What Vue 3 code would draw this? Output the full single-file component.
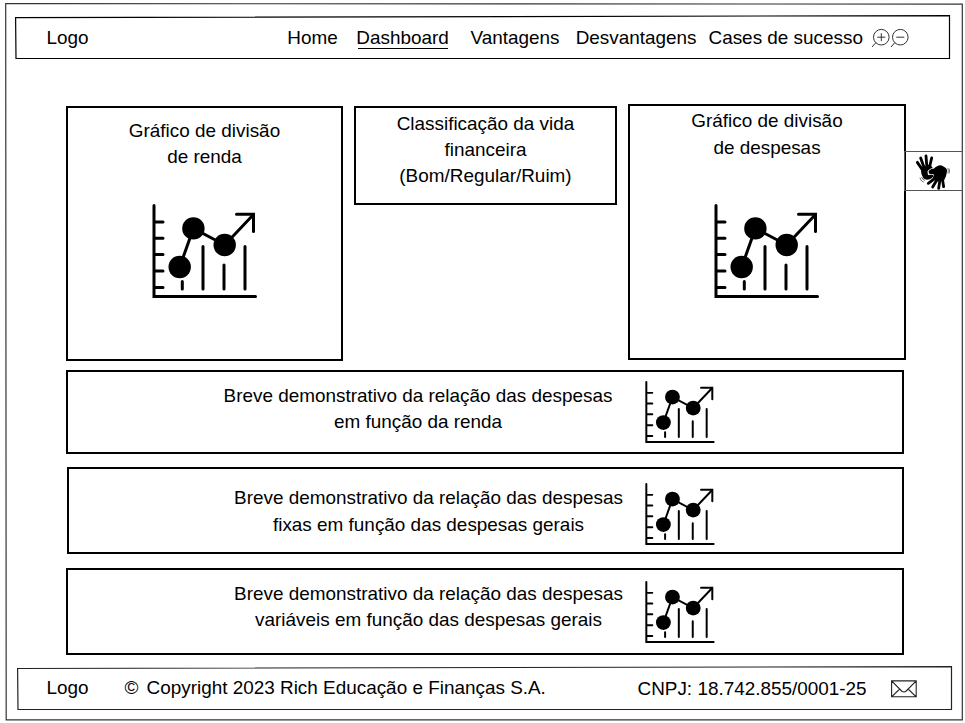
<script setup>
import { h } from 'vue'

const navItems = [
  { label: 'Home', name: 'home' },
  { label: 'Dashboard', name: 'dashboard', active: true },
  { label: 'Vantagens', name: 'vantagens' },
  { label: 'Desvantagens', name: 'desvantagens' },
  { label: 'Cases de sucesso', name: 'cases' },
]

const rows = [
  { name: 'renda', lines: ['Breve demonstrativo da relação das despesas', 'em função da renda'] },
  { name: 'fixas', lines: ['Breve demonstrativo da relação das despesas', 'fixas em função das despesas gerais'] },
  { name: 'variaveis', lines: ['Breve demonstrativo da relação das despesas', 'variáveis em função das despesas gerais'] },
]

const ChartIcon = () =>
  h('svg', { viewBox: '0 0 106 94', preserveAspectRatio: 'none', fill: 'none', stroke: '#000', 'stroke-width': 3, 'stroke-linecap': 'round' }, [
    h('path', { d: 'M2 1.5V92.5H103.5M2 18H11M2 34.2H11M2 50.5H11M2 67H11M2 83.5H11' }),
    h('path', { d: 'M30.3 77.5V85M51 42.5V85M72 61V85M93 42.5V85' }),
    h('path', { d: 'M27.7 63L41.4 24.4L72.7 41L101 11' }),
    h('path', { d: 'M84.5 10.3H101.5V27.5' }),
    h('g', { fill: '#000', stroke: 'none' }, [
      h('circle', { cx: 27.7, cy: 63, r: 11.2 }),
      h('circle', { cx: 41.4, cy: 24.4, r: 11.2 }),
      h('circle', { cx: 72.7, cy: 41, r: 11.2 }),
    ]),
  ])
</script>

<template>
  <div class="page">
    <svg class="outline" viewBox="0 0 965 723" aria-hidden="true">
      <path d="M5.7 3.6L962.3 4.1V719.8H6.2Z" stroke="#333" />
    </svg>

    <header class="bar header">
      <svg class="outline" viewBox="0 0 936 45" aria-hidden="true">
        <path d="M.6 2.6L934.5 .6V43.5H1Z" />
      </svg>
      <span class="logo">Logo</span>
      <nav class="nav">
        <a v-for="item in navItems" :key="item.name" :class="['link', item.name, { active: item.active }]">{{ item.label }}</a>
      </nav>
      <svg class="zoom" viewBox="0 0 39 20" aria-label="Zoom">
        <circle cx="10.3" cy="9.2" r="7.8" />
        <path d="M4.8 14.7L1 19M6.3 9.2H14.3M10.3 5.2V13.2" />
        <circle cx="29.3" cy="9.2" r="7.8" />
        <path d="M23.8 14.7L20 19M25.3 9.2H33.3" />
      </svg>
    </header>

    <main class="content">
      <section class="cards">
        <article class="card income">
          <p>Gráfico de divisão<br />de renda</p>
          <ChartIcon class="chart" />
        </article>
        <article class="card rating">
          <p>Classificação da vida<br />financeira<br />(Bom/Regular/Ruim)</p>
        </article>
        <article class="card expenses">
          <p>Gráfico de divisão<br />de despesas</p>
          <ChartIcon class="chart" />
        </article>
      </section>

      <section v-for="row in rows" :key="row.name" :class="['row', row.name]">
        <p>{{ row.lines[0] }}<br />{{ row.lines[1] }}</p>
        <ChartIcon class="chart-small" />
      </section>
    </main>

    <footer class="bar footer">
      <svg class="outline" viewBox="0 0 936 45" aria-hidden="true">
        <path d="M.6 2.5L934.5 .6V43.5H1Z" stroke="#222" />
      </svg>
      <span class="logo">Logo</span>
      <span class="mark">©</span>
      <span class="copyright">Copyright 2023 Rich Educação e Finanças S.A.</span>
      <span class="cnpj">CNPJ: 18.742.855/0001-25</span>
      <svg class="mail" viewBox="0 0 26 18" aria-label="E-mail">
        <path d="M.6 .9H25.2V16.8H.6ZM.6 .9L10.6 11Q12.9 13 15.2 11L25.2 .9M.6 16.8L8.7 9M25.2 16.8L17.1 9" />
      </svg>
    </footer>

    <aside class="sign">
      <svg viewBox="0 0 105 108" aria-label="Libras">
        <g stroke="#000" stroke-linecap="round" stroke-linejoin="round" fill="none">
          <path d="M24 50L7 25M29 46L17 12M36 44L33 6M43 42L50 12" stroke-width="8.5" />
          <path d="M20 46L44 34L52 44L58 56L50 70Q36 79 27 71Q20 60 20 46Z" fill="#000" stroke-width="5" />
        </g>
        <path d="M39 51Q47 43 57 43Q65 34 77 34Q97 42 95 53Q96 66 84 78L67 80L52 74L58 63Q50 59 40 62Z" fill="#fff" stroke="#fff" stroke-width="3" stroke-linejoin="round" />
        <g stroke="#000" stroke-linecap="round" stroke-linejoin="round" fill="none">
          <path d="M43 52Q50 46 58 46Q67 36 77 36Q93 42 94 50Q92 66 85 78L64 80L56 71L61 61Q53 57 45 58Z" fill="#000" stroke-width="5" />
          <path d="M61 72L40 88M67 76L53 99M75 76L71 103M82 74L86 98" stroke-width="8.5" />
          <path d="M15 72Q17 82 25 84M20 70Q22 77 29 79" stroke="#444" stroke-width="2.4" />
          <path d="M99 43Q102 50 99 58M103 45Q105 51 103 57" stroke="#666" stroke-width="2.4" />
        </g>
      </svg>
    </aside>
  </div>
</template>

<style>
body {
  background: #fff;
}
</style>

<style scoped>
.page {
  position: relative;
  box-sizing: border-box;
  width: 965px;
  height: 723px;
  padding: 15px 14px 0 15px;
  overflow: hidden;
  background: #fff;
  color: #000;
  font: 18.92px/26px "Liberation Sans", Arial, sans-serif;
}
p {
  margin: 0;
  text-align: center;
  white-space: nowrap;
}
svg {
  display: block;
  flex: none;
}
.outline {
  position: absolute;
  inset: 0;
  width: 100%;
  height: 100%;
  fill: none;
  stroke: #000;
  stroke-width: 1.2;
}
.bar {
  position: relative;
  display: flex;
  box-sizing: border-box;
  width: 936px;
  height: 45px;
  white-space: nowrap;
}
.header {
  padding: 10px 0 0 31.5px;
}
.logo {
  width: 78px;
}
.nav {
  display: flex;
  margin-left: 162.8px;
}
.link {
  position: relative;
}
.dashboard {
  margin-left: 18.6px;
}
.vantagens {
  margin-left: 21.6px;
}
.desvantagens {
  margin-left: 16.2px;
}
.cases {
  margin-left: 12px;
}
.active::after {
  content: "";
  position: absolute;
  left: 2px;
  right: 1px;
  top: 23px;
  height: 1px;
  background: #000;
}
.zoom {
  width: 39px;
  height: 20px;
  margin: 2.5px 0 0 8.2px;
  fill: none;
  stroke: #333;
  stroke-width: 1;
}
.content {
  padding: 44px 0 0 51px;
}
.cards {
  display: flex;
  align-items: flex-start;
  height: 266px;
}
.card {
  display: flex;
  flex-direction: column;
  align-items: center;
  box-sizing: border-box;
  border: 2px solid #000;
}
.income {
  width: 277px;
  height: 255px;
  margin-top: 2px;
  padding-top: 10px;
}
.rating {
  width: 263px;
  height: 99px;
  margin: 2px 0 0 11px;
  padding-top: 3px;
}
.expenses {
  width: 278px;
  height: 256px;
  margin-left: 11px;
  padding-top: 1px;
  line-height: 27px;
}
.chart {
  width: 106px;
  height: 94px;
  margin: 34px 0 0 1px;
}
.expenses .chart {
  margin: 43px 0 0 -1px;
}
.row {
  display: flex;
  box-sizing: border-box;
  width: 838px;
  border: 2px solid #000;
}
.row p {
  width: 392px;
}
.renda {
  height: 84px;
  padding: 11px 0 0 154px;
}
.fixas {
  width: 837px;
  height: 87px;
  margin: 13px 0 0 1px;
  padding: 15px 0 0 163.5px;
  line-height: 27px;
}
.variaveis {
  height: 87px;
  margin-top: 14px;
  padding: 11px 0 0 164.5px;
}
.chart-small {
  width: 70.3px;
  height: 62px;
  margin: -2.4px 0 0 31.4px;
}
.fixas .chart-small {
  margin: -1.2px 0 0 20.9px;
}
.variaveis .chart-small {
  margin: -.4px 0 0 20.9px;
}
.footer {
  margin: 11px 0 0 2px;
  padding: 9px 0 0 29.5px;
}
.mark {
  width: 22px;
}
.copyright {
  width: 491px;
}
.footer .logo {
  width: 78px;
}
.cnpj {
  width: 253.5px;
  padding-top: 1px;
}
.mail {
  width: 26px;
  height: 18px;
  margin-top: 5px;
  fill: none;
  stroke: #222;
  stroke-width: 1.1;
}
.sign {
  position: absolute;
  left: 904px;
  top: 151px;
  box-sizing: border-box;
  width: 59px;
  height: 40px;
  padding: 1.5px 0 0 9.5px;
  border: 1px solid #555;
}
.sign svg {
  width: 35px;
  height: 36px;
}
</style>
